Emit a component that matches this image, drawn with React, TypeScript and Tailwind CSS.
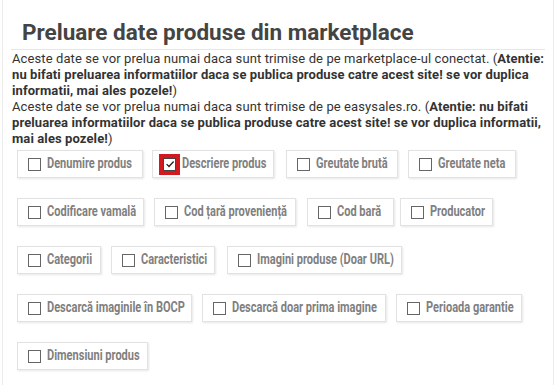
type ChipData = { label: string; w: number; ml: number; checked?: boolean };

// widths and left gaps read off the screenshot
const ROWS: ChipData[][] = [
  [
    { label: "Denumire produs", w: 126, ml: 0 },
    { label: "Descriere produs", w: 122, ml: 9, checked: true },
    { label: "Greutate brută", w: 112, ml: 12 },
    { label: "Greutate neta", w: 108, ml: 10 },
  ],
  [
    { label: "Codificare vamală", w: 127, ml: 0 },
    { label: "Cod țară proveniență", w: 142, ml: 10 },
    { label: "Cod bară", w: 87, ml: 11 },
    { label: "Producator", w: 93, ml: 6 },
  ],
  [
    { label: "Categorii", w: 84, ml: 0 },
    { label: "Caracteristici", w: 104, ml: 10 },
    { label: "Imagini produse (Doar URL)", w: 175, ml: 12 },
  ],
  [
    { label: "Descarcă imaginile în BOCP", w: 175, ml: 0 },
    { label: "Descarcă doar prima imagine", w: 184, ml: 10 },
    { label: "Perioada garantie", w: 126, ml: 10 },
  ],
  [{ label: "Dimensiuni produs", w: 131, ml: 0 }],
];

function Chip({ label, w, ml, checked }: ChipData) {
  return (
    <label
      className="flex h-[28px] shrink-0 items-center gap-[6px] overflow-hidden border border-[#e2e2e2] bg-white pl-[10px] shadow-[1px_1px_2px_rgba(0,0,0,0.1)]"
      style={{ width: w, marginLeft: ml }}
    >
      {checked ? (
        <span className="flex h-[13px] w-[13px] shrink-0 items-center justify-center border border-[#444] bg-white outline-[4px] outline-solid outline-[#d11a1f]">
          <svg width="10" height="10" viewBox="0 0 10 10">
            <path d="M1.6 5.1 L4 7.5 L8.6 2.5" fill="none" stroke="#222" strokeWidth="1.3" />
          </svg>
        </span>
      ) : (
        <span className="h-[13px] w-[13px] shrink-0 border border-[#666] bg-white" />
      )}
      <span className="inline-block origin-left scale-x-[0.76] whitespace-nowrap font-['Roboto',sans-serif] text-[14.5px] font-bold text-[#808080]">
        {label}
      </span>
    </label>
  );
}

export default function App() {
  return (
    <div className="h-[385px] w-[555px] overflow-hidden bg-white">
      <div className="ml-[2px] h-full w-[552px] border-x border-[#ebebeb] font-['Roboto',sans-serif]">
        <div className="mx-[8px] border-b border-[#e6e6e6] pl-[11px] pt-[19px] pb-[3px]">
          <h1 className="text-[22.5px] font-bold leading-[27px] text-[#444]">
            Preluare date produse din marketplace
          </h1>
        </div>
        <div className="px-[9px] pt-[1px] text-[13px] leading-[16px] tracking-[0.1px] text-[#333]">
          <p>
            Aceste date se vor prelua numai daca sunt trimise de pe marketplace-ul conectat. (
            <b>
              Atentie: nu bifati preluarea informatiilor daca se publica produse catre acest site! se
              vor duplica informatii, mai ales pozele!
            </b>
            )
          </p>
          <p>
            Aceste date se vor prelua numai daca sunt trimise de pe easysales.ro. (
            <b>
              Atentie: nu bifati preluarea informatiilor daca se publica produse catre acest site! se
              vor duplica informatii, mai ales pozele!
            </b>
            )
          </p>
        </div>
        <div className="flex flex-col gap-[20px] pl-[14px] pt-[3px]">
          {ROWS.map((row, i) => (
            <div key={i} className="flex">
              {row.map((c) => (
                <Chip key={c.label} {...c} />
              ))}
            </div>
          ))}
        </div>
      </div>
    </div>
  );
}
